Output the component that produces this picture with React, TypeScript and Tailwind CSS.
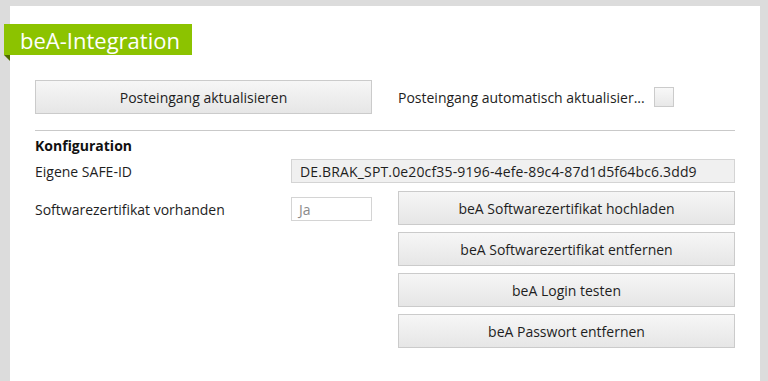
import React from "react";

const font = { fontFamily: '"Open Sans", "Noto Sans", sans-serif' };

function Btn({ label, className = "" }: { label: string; className?: string }) {
  return (
    <button
      className={
        "h-[34px] border border-[#cbcbcb] bg-gradient-to-b from-[#f6f6f6] to-[#e6e6e6] text-[14px] text-[#1e1e1e] flex items-center justify-center " +
        className
      }
    >
      {label}
    </button>
  );
}

export default function App() {
  return (
    <div
      className="w-[768px] h-[381px] bg-[#dcdcdc] pt-[6px] pl-[10px] pr-[8px] overflow-hidden"
      style={font}
    >
      <div className="bg-white h-full w-full">
        <div className="pt-[18px]">
          <div className="relative -ml-[6px] w-[188px] h-[31px] bg-[#8cc300] flex items-center pl-[16px]">
            <span className="text-white text-[22px] leading-none">beA-Integration</span>
            <svg className="absolute left-0 top-[31px]" width="6" height="6" viewBox="0 0 6 6">
              <polygon points="0,0 6,0 6,6" fill="#4f6b00" />
            </svg>
          </div>
        </div>
        <div className="pl-[25px] w-[725px]">
          <div className="mt-[25px] flex items-center">
            <Btn label="Posteingang aktualisieren" className="w-[337px]" />
            <span className="ml-[26px] text-[14px] text-[#1e1e1e]">Posteingang automatisch aktualisier...</span>
            <div className="ml-[9px] w-[20px] h-[20px] border border-[#cbcbcb] bg-gradient-to-b from-[#f8f8f8] to-[#e8e8e8]" />
          </div>
          <div className="mt-[16px] h-px bg-[#c9c9c9] w-[700px]" />
          <div className="mt-[5px] text-[14px] font-bold text-[#111] leading-[20px]">Konfiguration</div>
          <div className="mt-[3px] flex items-center">
            <span className="w-[256px] text-[14px] text-[#1e1e1e]">Eigene SAFE-ID</span>
            <div className="w-[444px] h-[24px] border border-[#d4d4d4] bg-[#f0f0f0] flex items-center pl-[8px] text-[14px] tracking-[0.15px] text-[#1e1e1e]">
              DE.BRAK_SPT.0e20cf35-9196-4efe-89c4-87d1d5f64bc6.3dd9
            </div>
          </div>
          <div className="mt-[8px] flex items-start">
            <span className="w-[256px] mt-[8px] text-[14px] text-[#1e1e1e]">Softwarezertifikat vorhanden</span>
            <div className="mt-[6px] w-[81px] h-[24px] border border-[#d4d4d4] bg-white flex items-center pl-[7px] text-[14px] text-[#8a8a8a]">
              Ja
            </div>
            <div className="ml-[26px] flex flex-col gap-[7px]">
              <Btn label="beA Softwarezertifikat hochladen" className="w-[337px]" />
              <Btn label="beA Softwarezertifikat entfernen" className="w-[337px]" />
              <Btn label="beA Login testen" className="w-[337px]" />
              <Btn label="beA Passwort entfernen" className="w-[337px]" />
            </div>
          </div>
        </div>
      </div>
    </div>
  );
}
